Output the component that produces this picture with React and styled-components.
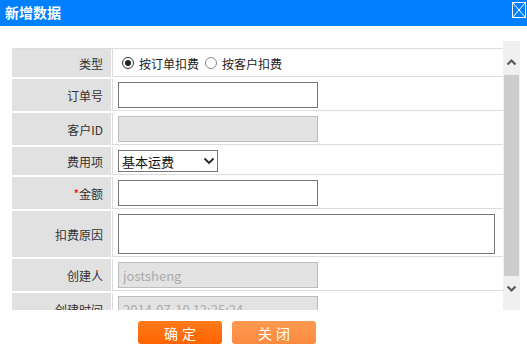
import React from 'react';
import styled, { createGlobalStyle } from 'styled-components';

// styling
const GlobalStyle = createGlobalStyle`
  html, body {
    margin: 0;
    padding: 0;
    background: #fff;
  }
  body {
    font-family: "Noto Sans CJK SC", "Noto Sans", sans-serif;
    font-size: 12px;
    color: #333;
    overflow: hidden;
  }
`

const Dialog = styled.div`
  width: 527px;
  height: 349px;
  display: flex;
  flex-direction: column;
  background: #fff;
`
const TitleBar = styled.div`
  height: 26px;
  flex: none;
  background: #0080ff;
  display: flex;
  align-items: flex-start;
  justify-content: space-between;
  padding: 0 1px 0 5px;
  box-sizing: border-box;
`
const Title = styled.h1`
  margin: 0;
  font-size: 14px;
  font-weight: bold;
  color: #fff;
  line-height: 25px;
`
const CloseBox = styled.span`
  display: block;
  width: 12px;
  height: 14px;
  margin-top: 2px;
  border: 1px solid #fff;
  svg { display: block; }
`
const Body = styled.div`
  display: flex;
  padding: 15px 7px 0 12px;
  height: 269px;
  flex: none;
`
const Viewport = styled.div`
  flex: 1;
  overflow: hidden;
  padding-top: 7px;
`
const Table = styled.div`
  display: flex;
  flex-direction: column;
  gap: 2px;
  border-top: 1px solid #dcdcdc;
`
const Row = styled.div`
  display: grid;
  grid-template-columns: 99px 1fr;
  column-gap: 1px;
`
const Label = styled.div`
  background: #e1e1e1;
  display: flex;
  align-items: center;
  justify-content: flex-end;
  padding-right: 8px;
  color: #333;
  white-space: nowrap;
`
const Star = styled.span`
  color: #e00;
`
const Value = styled.div`
  border-left: 1px solid #dcdcdc;
  border-bottom: 1px solid #dcdcdc;
  padding: 3px 5px 2px;
  display: flex;
  align-items: ${p => (p.$top ? 'flex-start' : 'center')};
`
const TextInput = styled.input`
  box-sizing: border-box;
  width: 200px;
  height: 26px;
  margin: 0;
  padding: 0 4px;
  border: 1px solid ${p => (p.disabled ? '#bdbdbd' : '#777')};
  background: ${p => (p.disabled ? '#e3e3e3' : '#fff')};
  color: #aaa;
  font-family: inherit;
  font-size: 13px;
  outline: none;
`
const TextArea = styled.textarea`
  box-sizing: border-box;
  width: 377px;
  height: 40px;
  margin: 0;
  border: 1px solid #777;
  resize: none;
  outline: none;
  font-family: inherit;
`
const RadioGroup = styled.div`
  display: flex;
  align-items: center;
  height: 22px;
  padding-left: 4px;
`
const RadioItem = styled.label`
  display: flex;
  align-items: center;
  gap: 5px;
  margin-right: 6px;
  font-size: 12px;
  color: #222;
`
const RadioMark = styled.span`
  box-sizing: border-box;
  width: 12px;
  height: 12px;
  border-radius: 50%;
  border: 1px solid ${p => (p.$on ? '#333' : '#888')};
  background: #fff;
  display: flex;
  align-items: center;
  justify-content: center;
  &::after {
    content: '';
    width: 6px;
    height: 6px;
    border-radius: 50%;
    background: ${p => (p.$on ? '#222' : 'transparent')};
  }
`
const SelectBox = styled.div`
  box-sizing: border-box;
  width: 100px;
  height: 22px;
  border: 1px solid #777;
  display: flex;
  align-items: center;
  justify-content: space-between;
  padding: 0 2px 0 3px;
  font-size: 13px;
  color: #111;
`
const Scrollbar = styled.div`
  width: 17px;
  flex: none;
  background: #f0f0f0;
  display: flex;
  flex-direction: column;
  align-items: center;
`
const ArrowArea = styled.div`
  height: 34px;
  flex: none;
  box-sizing: border-box;
  padding-top: ${p => p.$pad}px;
  svg { display: block; }
`
const Thumb = styled.div`
  width: 15px;
  height: 201px;
  background: #cdcdcd;
`
const Footer = styled.div`
  display: flex;
  gap: 10px;
  padding: 11px 0 0 138px;
`
const Button = styled.button`
  width: 84px;
  height: 23px;
  border: none;
  border-radius: 3px;
  padding: 0;
  color: #fff;
  font-family: inherit;
  font-size: 14px;
  letter-spacing: 4px;
  text-indent: 4px;
  background: ${p => (p.$primary
    ? 'linear-gradient(#ff7a1c, #ff6400)'
    : 'linear-gradient(#fe9a52, #fb8a3e)')};
`
// styling

const Chevron = ({ up }) => (
  <svg width="11" height="8" viewBox="0 0 11 8">
    <path
      d={up ? 'M1.5 6.5 L5.5 2.5 L9.5 6.5' : 'M1.5 1.5 L5.5 5.5 L9.5 1.5'}
      fill="none"
      stroke="#5a5a5a"
      strokeWidth="2.2"
    />
  </svg>
)

function App() {
  return (
    <Dialog>
      <GlobalStyle />
      <TitleBar>
        <Title>新增数据</Title>
        <CloseBox>
          <svg width="12" height="14" viewBox="0 0 12 14">
            <path d="M0 0 L12 14 M12 0 L0 14" stroke="#fff" strokeWidth="1" />
          </svg>
        </CloseBox>
      </TitleBar>

      <Body>
        <Viewport>
          <Table>
            <Row>
              <Label>类型</Label>
              <Value>
                <RadioGroup>
                  <RadioItem><RadioMark $on />按订单扣费</RadioItem>
                  <RadioItem><RadioMark />按客户扣费</RadioItem>
                </RadioGroup>
              </Value>
            </Row>
            <Row>
              <Label>订单号</Label>
              <Value><TextInput type="text" /></Value>
            </Row>
            <Row>
              <Label>客户ID</Label>
              <Value><TextInput type="text" disabled /></Value>
            </Row>
            <Row>
              <Label>费用项</Label>
              <Value>
                <SelectBox>
                  <span>基本运费</span>
                  <svg width="12" height="8" viewBox="0 0 12 8">
                    <path d="M1.5 1.5 L6 6 L10.5 1.5" fill="none" stroke="#222" strokeWidth="1.8" />
                  </svg>
                </SelectBox>
              </Value>
            </Row>
            <Row>
              <Label><Star>*</Star>金额</Label>
              <Value><TextInput type="text" /></Value>
            </Row>
            <Row>
              <Label>扣费原因</Label>
              <Value $top><TextArea /></Value>
            </Row>
            <Row>
              <Label>创建人</Label>
              <Value><TextInput type="text" disabled defaultValue="jostsheng" /></Value>
            </Row>
            <Row>
              <Label>创建时间</Label>
              <Value><TextInput type="text" disabled defaultValue="2014-07-10 12:25:24" /></Value>
            </Row>
          </Table>
        </Viewport>
        <Scrollbar>
          <ArrowArea $pad={17}><Chevron up /></ArrowArea>
          <Thumb />
          <ArrowArea $pad={9}><Chevron /></ArrowArea>
        </Scrollbar>
      </Body>

      <Footer>
        <Button $primary>确定</Button>
        <Button>关闭</Button>
      </Footer>
    </Dialog>
  )
}

export default App
